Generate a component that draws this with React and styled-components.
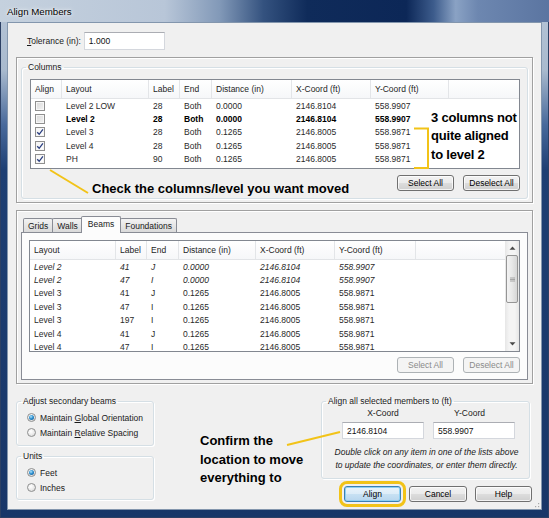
import React from "react";
import styled, { createGlobalStyle, css } from "styled-components";

const UI_FONT = `"Liberation Sans", Arial, sans-serif`;
const NOTE_YELLOW = "#f2c318";

const GlobalStyle = createGlobalStyle`
  html, body {
    margin: 0;
    padding: 0;
    background: #fff;
  }
  body {
    font-family: ${UI_FONT};
  }
`;

const Window = styled.div`
  position: relative;
  width: 549px;
  height: 518px;
  box-sizing: border-box;
  display: flex;
  flex-direction: column;
  padding: 0 7px 8px;
  background: linear-gradient(
    to bottom,
    #b6c5d7 0px,
    #a9bace 70px,
    #48699b 125px,
    #1e3f73 170px,
    #183668 100%
  );
  box-shadow: inset 0 0 0 1px #2c4064;
  font-family: ${UI_FONT};
  font-size: 8.5px;
  color: #1a1a1a;
  overflow: hidden;
`;

const TitleBar = styled.div`
  flex-shrink: 0;
  height: 22px;
  margin: 0 -7px;
  padding-left: 7px;
  display: flex;
  align-items: center;
  background: linear-gradient(
    to right,
    #c5d1de 0%,
    #b8c6d8 30%,
    #8299b8 40%,
    #34527f 48%,
    #0f2b5a 56%,
    #0c2757 74%,
    #3d5c8c 79%,
    #8aa2c4 83%,
    #6d87b0 87%,
    #5b75a1 100%
  );
  font-size: 9.7px;
  color: #000;
  text-shadow: 0 0 5px rgba(255, 255, 255, 0.9), 0 0 2px rgba(255, 255, 255, 0.9);
`;

const Client = styled.div`
  flex: 1;
  min-height: 0;
  display: flex;
  flex-direction: column;
  background: #f0f0f0;
  border: 1px solid #8396ad;
  padding: 9px 8px 0;
`;

const ToleranceRow = styled.div`
  display: flex;
  align-items: center;
  height: 18px;
  margin-left: 11px;
`;

const FieldLabel = styled.span`
  margin-right: 3px;
  white-space: nowrap;
`;

const TextBox = styled.div`
  width: ${(p) => p.$w}px;
  height: ${(p) => p.$h}px;
  box-sizing: border-box;
  display: flex;
  align-items: center;
  padding-left: 4px;
  background: #fff;
  border: 1px solid #d4d7dd;
  border-top-color: #abadb3;
  color: #111;
`;

const Panel = styled.div`
  margin-top: 7px;
  border: 1px solid #a0a0a0;
  box-shadow: inset 1px 1px 0 #fff, 1px 1px 0 #fff;
  padding: ${(p) => p.$top}px 4px 3px 4px;
`;

const GroupBox = styled.fieldset`
  margin: 0;
  padding: 0;
  min-width: 0;
  width: ${(p) => (p.$w ? `${p.$w}px` : "auto")};
  box-sizing: border-box;
  border: 1px solid #d5dfe5;
  border-radius: 3px;
  box-shadow: 1px 1px 0 #fff, inset 1px 1px 0 #fff;
`;

const Legend = styled.legend`
  margin-left: 4px;
  padding: 0 2px;
  line-height: 12px;
  color: #1a1a1a;
`;

const GroupBody = styled.div`
  padding: ${(p) => p.$pad};
`;

const ListView = styled.div`
  position: relative;
  height: ${(p) => p.$h}px;
  box-sizing: border-box;
  display: flex;
  background: #fff;
  border: 1px solid #828790;
  overflow: hidden;
`;

const ListBody = styled.div`
  flex: 1;
  min-width: 0;
  display: flex;
  flex-direction: column;
  overflow: hidden;
`;

const HeaderRow = styled.div`
  flex-shrink: 0;
  display: grid;
  grid-template-columns: ${(p) => p.$cols};
  height: 19px;
  box-sizing: border-box;
  border-bottom: 1px solid #e2e4e7;
  background: linear-gradient(#ffffff, #f6f7f9);
`;

const HeaderCell = styled.div`
  display: flex;
  align-items: center;
  padding-left: 4px;
  white-space: nowrap;
  border-right: 1px solid #e3e5e8;
  color: #1e1e1e;

  &:last-child {
    border-right: none;
  }
`;

const DataRow = styled.div`
  flex-shrink: 0;
  display: grid;
  grid-template-columns: ${(p) => p.$cols};
  height: 13.4px;
  align-items: center;
  font-weight: ${(p) => (p.$bold ? "bold" : "normal")};
  font-style: ${(p) => (p.$italic ? "italic" : "normal")};
  color: ${(p) => (p.$bold ? "#000" : "#2a2a2a")};
`;

const DataCell = styled.div`
  display: flex;
  align-items: center;
  padding-left: 4px;
  white-space: nowrap;
  overflow: hidden;
`;

const CheckBox = styled.span`
  display: inline-flex;
  align-items: center;
  justify-content: center;
  width: 10px;
  height: 10px;
  box-sizing: border-box;
  border: 1px solid #8f8f8f;
  background: ${(p) =>
    p.$checked
      ? "linear-gradient(135deg, #f4f4f4, #ffffff)"
      : "linear-gradient(135deg, #d8d8d8, #f3f3f3)"};
  box-shadow: inset 0 0 0 1px #f6f6f6;
`;

const ScrollBar = styled.div`
  flex-shrink: 0;
  width: 14px;
  display: flex;
  flex-direction: column;
  background: linear-gradient(to right, #e6e6e6, #f4f4f4 30%, #f4f4f4 70%, #e6e6e6);
`;

const ScrollArrow = styled.div`
  height: 14px;
  display: flex;
  align-items: center;
  justify-content: center;
`;

const ScrollThumb = styled.div`
  height: 48px;
  margin: 0 1px;
  display: flex;
  align-items: center;
  justify-content: center;
  border: 1px solid #959595;
  border-radius: 2px;
  box-sizing: border-box;
  background: linear-gradient(to right, #f3f3f3, #e8e8e8 50%, #d6d6d6);
`;

const ScrollTrack = styled.div`
  flex: 1;
`;

const ButtonRow = styled.div`
  display: flex;
  align-items: flex-start;
  justify-content: flex-end;
  gap: ${(p) => p.$gap}px;
  height: 16px;
  margin-top: ${(p) => p.$top}px;
  padding-right: ${(p) => p.$right || 0}px;
`;

const Button = styled.button`
  width: ${(p) => p.$w || 57}px;
  height: 16px;
  flex-shrink: 0;
  padding: 0;
  font-family: ${UI_FONT};
  font-size: 8.5px;
  color: #000;
  border: 1px solid #707070;
  border-radius: 3px;
  background: linear-gradient(#f2f2f2 0%, #ebebeb 49%, #dddddd 50%, #cfcfcf 100%);
  box-shadow: inset 0 0 0 1px rgba(255, 255, 255, 0.75);

  ${(p) =>
    p.disabled &&
    css`
      border-color: #adb2b5;
      background: #f4f4f4;
      color: #8a8a8a;
      box-shadow: none;
    `}

  ${(p) =>
    p.$default &&
    css`
      border-color: #3c7fb1;
      background: linear-gradient(#eaf4fb 0%, #dcecf8 49%, #c8e1f3 50%, #b7d6ee 100%);
      box-shadow: inset 0 0 0 1px #8fd0f2;
    `}

  ${(p) =>
    p.$highlight &&
    css`
      outline: 3px solid ${NOTE_YELLOW};
      outline-offset: 2px;
    `}
`;

const CalloutText = styled.div`
  font-family: ${UI_FONT};
  font-weight: bold;
  font-size: 13px;
  line-height: 18.5px;
  color: #000;
  white-space: nowrap;
`;

const RowCallout = styled(CalloutText)`
  margin-top: 5px;
  margin-left: 62px;
  margin-right: auto;
`;

const ListCallout = styled(CalloutText)`
  position: absolute;
  left: 400px;
  top: 28.75px;
  letter-spacing: -0.2px;
`;

const TabStrip = styled.div`
  display: flex;
  align-items: flex-end;
  height: 17px;
  padding-left: 2px;
  margin-bottom: -1px;
`;

const Tab = styled.div`
  position: relative;
  display: flex;
  align-items: center;
  padding: 0 4px;
  height: 14px;
  margin-bottom: 1px;
  margin-right: -1px;
  box-sizing: border-box;
  border: 1px solid #898c95;
  border-bottom: none;
  border-radius: 2px 2px 0 0;
  background: linear-gradient(#f3f3f3, #e6e6e6 50%, #dadada);
  color: #1a1a1a;

  ${(p) =>
    p.$active &&
    css`
      z-index: 1;
      height: 17px;
      margin-bottom: 0;
      margin-left: -1px;
      margin-right: -1px;
      padding: 0 6px 2px;
      background: #fcfcfc;
    `}
`;

const TabPage = styled.div`
  border: 1px solid #898c95;
  background: #fcfcfc;
  padding: 7px 7px 6px 7px;
`;

const BottomArea = styled.div`
  display: flex;
  margin-top: 11px;
`;

const LeftColumn = styled.div`
  width: 138px;
  flex-shrink: 0;
  display: flex;
  flex-direction: column;
  gap: 4px;
`;

const MiddleColumn = styled.div`
  flex: 1;
  padding: 37px 0 0 46px;
`;

const RightColumn = styled.div`
  width: 212px;
  flex-shrink: 0;
`;

const RadioRow = styled.div`
  display: flex;
  align-items: center;
  height: 15px;
  padding-left: 10px;
  white-space: nowrap;
`;

const Radio = styled.span`
  position: relative;
  width: 9px;
  height: 9px;
  margin-right: 4px;
  box-sizing: border-box;
  border-radius: 50%;
  border: 1px solid #8e8f8f;
  background: radial-gradient(circle at 40% 35%, #ffffff 0, #f0f0f0 40%, #d2d2d2 100%);

  ${(p) =>
    p.$checked &&
    css`
      &::after {
        content: "";
        position: absolute;
        inset: 1px;
        border-radius: 50%;
        background: radial-gradient(circle at 40% 35%, #b6e6fa 0, #2b8fd0 45%, #0d4c84 100%);
      }
    `}
`;

const CoordGrid = styled.div`
  display: grid;
  grid-template-columns: 82px 82px;
  column-gap: 9px;
`;

const CoordLabel = styled.div`
  height: 12px;
  line-height: 12px;
  text-align: center;
  margin-bottom: 3px;
  padding-right: ${(p) => p.$shift || 0}px;
`;

const Note = styled.div`
  margin-top: 6.5px;
  font-style: italic;
  line-height: 13px;
  text-align: center;
  white-space: nowrap;
  margin-left: -10px;
  margin-right: -6px;
`;

const Overlay = styled.svg`
  position: absolute;
  left: 0;
  top: 0;
  pointer-events: none;
  z-index: 5;
`;

const COLUMN_COLS = "31px 87px 31px 32px 80px 79px 78px 1fr";
const BEAM_COLS = "86px 31px 32px 77px 79px 81px 1fr";

const columnRows = [
  { checked: false, layout: "Level 2 LOW", label: "28", end: "Both", dist: "0.0000", x: "2146.8104", y: "558.9907" },
  { checked: false, layout: "Level 2", label: "28", end: "Both", dist: "0.0000", x: "2146.8104", y: "558.9907", bold: true },
  { checked: true, layout: "Level 3", label: "28", end: "Both", dist: "0.1265", x: "2146.8005", y: "558.9871" },
  { checked: true, layout: "Level 4", label: "28", end: "Both", dist: "0.1265", x: "2146.8005", y: "558.9871" },
  { checked: true, layout: "PH", label: "90", end: "Both", dist: "0.1265", x: "2146.8005", y: "558.9871" },
];

const beamRows = [
  { layout: "Level 2", label: "41", end: "J", dist: "0.0000", x: "2146.8104", y: "558.9907", italic: true },
  { layout: "Level 2", label: "47", end: "I", dist: "0.0000", x: "2146.8104", y: "558.9907", italic: true },
  { layout: "Level 3", label: "41", end: "J", dist: "0.1265", x: "2146.8005", y: "558.9871" },
  { layout: "Level 3", label: "47", end: "I", dist: "0.1265", x: "2146.8005", y: "558.9871" },
  { layout: "Level 3", label: "197", end: "I", dist: "0.1265", x: "2146.8005", y: "558.9871" },
  { layout: "Level 4", label: "41", end: "J", dist: "0.1265", x: "2146.8005", y: "558.9871" },
  { layout: "Level 4", label: "47", end: "I", dist: "0.1265", x: "2146.8005", y: "558.9871" },
];

const CheckMark = () => (
  <svg width="8" height="8" viewBox="0 0 8 8">
    <path d="M1.2 4.2 L3.2 6.3 L6.9 1.3" fill="none" stroke="#2b3f80" strokeWidth="1.3" />
  </svg>
);

const Arrow = ({ up }) => (
  <svg width="7" height="4" viewBox="0 0 7 4">
    <path d={up ? "M0.5 3.8 L3.5 0.5 L6.5 3.8 Z" : "M0.5 0.2 L3.5 3.5 L6.5 0.2 Z"} fill="#4a4a4a" />
  </svg>
);

const Grip = () => (
  <svg width="5" height="5" viewBox="0 0 5 5">
    <path d="M0 1 H5 M0 2.5 H5 M0 4 H5" stroke="#8a8a8a" strokeWidth="0.7" />
  </svg>
);

const App = () => {
  return (
    <>
      <GlobalStyle />
      <Window>
        <TitleBar>Align Members</TitleBar>
        <Client>
          <ToleranceRow>
            <FieldLabel>
              <u>T</u>olerance (in):
            </FieldLabel>
            <TextBox $w={81} $h={18}>1.000</TextBox>
          </ToleranceRow>

          {/* columns list */}
          <Panel $top={3}>
            <GroupBox>
              <Legend>Columns</Legend>
              <GroupBody $pad="6px 7px 7px 8px">
                <ListView $h={90}>
                  <ListBody>
                    <HeaderRow $cols={COLUMN_COLS}>
                      {["Align", "Layout", "Label", "End", "Distance (in)", "X-Coord (ft)", "Y-Coord (ft)", ""].map((h, i) => (
                        <HeaderCell key={i}>{h}</HeaderCell>
                      ))}
                    </HeaderRow>
                    {columnRows.map((r, i) => (
                      <DataRow key={i} $cols={COLUMN_COLS} $bold={r.bold}>
                        <DataCell>
                          <CheckBox $checked={r.checked}>{r.checked && <CheckMark />}</CheckBox>
                        </DataCell>
                        <DataCell>{r.layout}</DataCell>
                        <DataCell>{r.label}</DataCell>
                        <DataCell>{r.end}</DataCell>
                        <DataCell>{r.dist}</DataCell>
                        <DataCell>{r.x}</DataCell>
                        <DataCell>{r.y}</DataCell>
                        <DataCell />
                      </DataRow>
                    ))}
                  </ListBody>
                  <ListCallout>
                    3 columns not
                    <br />
                    quite aligned
                    <br />
                    to level 2
                  </ListCallout>
                </ListView>
                <ButtonRow $top={6} $gap={9}>
                  <RowCallout>Check the columns/level you want moved</RowCallout>
                  <Button>Select All</Button>
                  <Button>Deselect All</Button>
                </ButtonRow>
              </GroupBody>
            </GroupBox>
          </Panel>

          {/* member tabs */}
          <Panel $top={5}>
            <TabStrip>
              <Tab>Grids</Tab>
              <Tab>Walls</Tab>
              <Tab $active>Beams</Tab>
              <Tab>Foundations</Tab>
            </TabStrip>
            <TabPage>
              <ListView $h={112}>
                <ListBody>
                  <HeaderRow $cols={BEAM_COLS}>
                    {["Layout", "Label", "End", "Distance (in)", "X-Coord (ft)", "Y-Coord (ft)", ""].map((h, i) => (
                      <HeaderCell key={i}>{h}</HeaderCell>
                    ))}
                  </HeaderRow>
                  {beamRows.map((r, i) => (
                    <DataRow key={i} $cols={BEAM_COLS} $italic={r.italic}>
                      <DataCell>{r.layout}</DataCell>
                      <DataCell>{r.label}</DataCell>
                      <DataCell>{r.end}</DataCell>
                      <DataCell>{r.dist}</DataCell>
                      <DataCell>{r.x}</DataCell>
                      <DataCell>{r.y}</DataCell>
                      <DataCell />
                    </DataRow>
                  ))}
                </ListBody>
                <ScrollBar>
                  <ScrollArrow>
                    <Arrow up />
                  </ScrollArrow>
                  <ScrollThumb>
                    <Grip />
                  </ScrollThumb>
                  <ScrollTrack />
                  <ScrollArrow>
                    <Arrow />
                  </ScrollArrow>
                </ScrollBar>
              </ListView>
              <ButtonRow $top={5} $gap={9}>
                <Button disabled>Select All</Button>
                <Button disabled>Deselect All</Button>
              </ButtonRow>
            </TabPage>
          </Panel>

          <BottomArea>
            <LeftColumn>
              <GroupBox>
                <Legend>Adjust secondary beams</Legend>
                <GroupBody $pad="3px 0 5px 0">
                  <RadioRow>
                    <Radio $checked />
                    Maintain&nbsp;<u>G</u>lobal Orientation
                  </RadioRow>
                  <RadioRow>
                    <Radio />
                    Maintain&nbsp;<u>R</u>elative Spacing
                  </RadioRow>
                </GroupBody>
              </GroupBox>
              <GroupBox>
                <Legend>Units</Legend>
                <GroupBody $pad="3px 0 4px 0">
                  <RadioRow>
                    <Radio $checked />
                    Feet
                  </RadioRow>
                  <RadioRow>
                    <Radio />
                    Inches
                  </RadioRow>
                </GroupBody>
              </GroupBox>
            </LeftColumn>

            <MiddleColumn>
              <CalloutText>
                Confirm the
                <br />
                location to move
                <br />
                everything to
              </CalloutText>
            </MiddleColumn>

            <RightColumn>
              <GroupBox $w={209}>
                <Legend>Align all selected members to (ft)</Legend>
                <GroupBody $pad="0 14px 6px 20px">
                  <CoordGrid>
                    <CoordLabel>X-Coord</CoordLabel>
                    <CoordLabel $shift={9}>Y-Coord</CoordLabel>
                    <TextBox $w={82} $h={17}>2146.8104</TextBox>
                    <TextBox $w={82} $h={17}>558.9907</TextBox>
                  </CoordGrid>
                  <Note>
                    Double click on any item in one of the lists above
                    <br />
                    to update the coordinates, or enter them directly.
                  </Note>
                </GroupBody>
              </GroupBox>
              <ButtonRow $top={7} $gap={8} $right={1}>
                <Button $default $highlight>
                  Align
                </Button>
                <Button $w={58}>Cancel</Button>
                <Button>Help</Button>
              </ButtonRow>
            </RightColumn>
          </BottomArea>
        </Client>

        {/* yellow callout lines drawn over the dialog */}
        <Overlay width="549" height="518" viewBox="0 0 549 518">
          <g stroke={NOTE_YELLOW} strokeWidth="2" fill="none">
            <line x1="50" y1="170" x2="88" y2="193" />
            <path d="M414 128.5 H428 V168 H414" />
            <line x1="287" y1="445" x2="340" y2="432" />
          </g>
          <g fill="#a8a8a8">
            <rect x="538" y="506" width="1.2" height="1.2" />
            <rect x="535" y="506" width="1.2" height="1.2" />
            <rect x="538" y="503" width="1.2" height="1.2" />
          </g>
        </Overlay>
      </Window>
    </>
  );
};

export default App;
